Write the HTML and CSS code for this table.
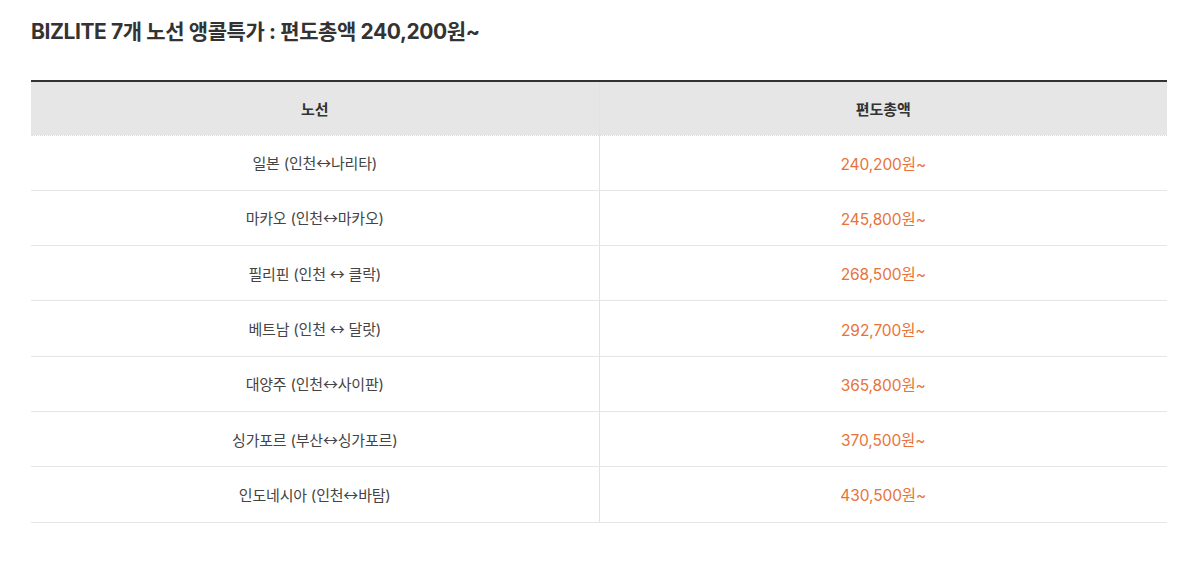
FILE: index.html
```html
<!DOCTYPE html>
<html lang="ko">
<head>
<meta charset="utf-8">
<link rel="stylesheet" href="styles.css">
</head>
<body>
<div class="wrap">
  <h2 class="title">BIZLITE 7개 노선 앵콜특가 : 편도총액 240,200원~</h2>
  <table class="fare">
    <thead>
      <tr><th>노선</th><th>편도총액</th></tr>
    </thead>
    <tbody>
      <tr><td>일본 (인천<span class="arr">↔</span>나리타)</td><td class="price">240,200원~</td></tr>
      <tr><td>마카오 (인천<span class="arr">↔</span>마카오)</td><td class="price">245,800원~</td></tr>
      <tr><td>필리핀 (인천 <span class="arr">↔</span> 클락)</td><td class="price">268,500원~</td></tr>
      <tr><td>베트남 (인천 <span class="arr">↔</span> 달랏)</td><td class="price">292,700원~</td></tr>
      <tr><td>대양주 (인천<span class="arr">↔</span>사이판)</td><td class="price">365,800원~</td></tr>
      <tr><td>싱가포르 (부산<span class="arr">↔</span>싱가포르)</td><td class="price">370,500원~</td></tr>
      <tr><td>인도네시아 (인천<span class="arr">↔</span>바탐)</td><td class="price">430,500원~</td></tr>
    </tbody>
  </table>
</div>
</body>
</html>
```

FILE: styles.css
```css
* { box-sizing: border-box; }
html, body { margin: 0; padding: 0; background: #fff; }
body {
  font-family: Inter, "Noto Sans CJK KR", "Noto Sans", sans-serif;
  color: #444;
}
.wrap {
  padding: 17px 33px 0 31px;
}
.title {
  margin: 0 0 33px 0;
  font-size: 21px;
  font-weight: 700;
  color: #333;
  line-height: 30px;
  letter-spacing: -0.4px;
}
.fare {
  width: 100%;
  border-collapse: collapse;
  border-top: 2px solid #333;
}
.fare th {
  background: #e6e6e6;
  height: 54px;
  font-size: 15px;
  font-weight: 700;
  color: #333;
  border-bottom: 1px dotted #ddd;
}
.fare th, .fare td {
  width: 50%;
  text-align: center;
  padding: 0;
}
.fare th:first-child, .fare td:first-child {
  border-right: 1px solid #e2e2e2;
}
.fare td {
  height: 55.3px;
  font-size: 15px;
  color: #444;
  border-bottom: 1px solid #e6e6e6;
}
.fare td:first-child {
  letter-spacing: -0.2px;
}
.arr {
  font-family: "Noto Sans CJK KR", sans-serif;
}
.fare td.price {
  color: #e8733a;
  font-size: 15.5px;
  letter-spacing: -0.1px;
}
```
